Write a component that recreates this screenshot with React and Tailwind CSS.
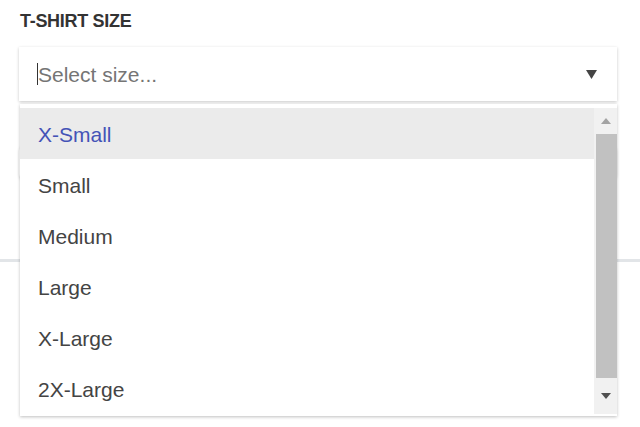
const sizes = ["X-Small", "Small", "Medium", "Large", "X-Large", "2X-Large"];

const App = () => {
  const active = 0;

  return (
    <div className="relative w-[640px] h-[427px] bg-white overflow-hidden font-['Liberation_Sans',Arial,sans-serif]">
      <div className="px-5 pt-[11px]">
        <h2 className="text-[18px] font-bold text-[#333] tracking-[-0.3px] leading-[20px]">
          T-SHIRT SIZE
        </h2>

        <div className="relative mt-[16px] w-[598px] -ml-px">
          {/* input */}
          <div className="h-[54px] bg-white shadow-[0_1px_3px_rgba(0,0,0,0.22)] flex items-center pl-[18px] pr-[20px]">
            <span className="w-px h-[22px] bg-[#333]"></span>
            <span className="flex-1 text-[21px] text-[#757575] leading-none">
              Select size...
            </span>
            <svg width="11" height="9" viewBox="0 0 11 9">
              <path d="M0 0h11L5.5 9z" fill="#444" />
            </svg>
          </div>

          {/* background content under the menu */}
          <div className="mt-[44px] h-[35px] rounded-md shadow-[0_1px_3px_rgba(0,0,0,0.15)] bg-white"></div>

          {/* dropdown menu */}
          <div className="absolute left-px right-0 top-[57px] z-10 bg-white shadow-[0_1px_3px_rgba(0,0,0,0.25)] pt-[4px] pb-[2px] flex">
            <ul className="flex-1">
              {sizes.map((size, index) => (
                <li
                  key={size}
                  className={`h-[51px] flex items-center pl-[18px] pt-[2px] text-[21px] leading-none ${
                    index === active
                      ? "bg-[#ebebeb] text-[#4453b7]"
                      : "text-[#444]"
                  }`}
                >
                  {size}
                </li>
              ))}
            </ul>
            <div className="w-[23px] bg-[#f1f1f1] flex flex-col items-center">
              <div className="h-[26px] flex items-center justify-center">
                <svg width="10" height="6" viewBox="0 0 10 6">
                  <path d="M5 0l5 6H0z" fill="#a3a3a3" />
                </svg>
              </div>
              <div className="w-[21px] h-[244px] bg-[#c1c1c1] ml-[2px]"></div>
              <div className="flex-1 flex items-center justify-center">
                <svg width="10" height="6" viewBox="0 0 10 6">
                  <path d="M0 0h10L5 6z" fill="#505050" />
                </svg>
              </div>
            </div>
          </div>
        </div>
      </div>

      <div className="mt-[79px] h-[3px] bg-[#e2e5e8]"></div>
    </div>
  );
};

export default App;
